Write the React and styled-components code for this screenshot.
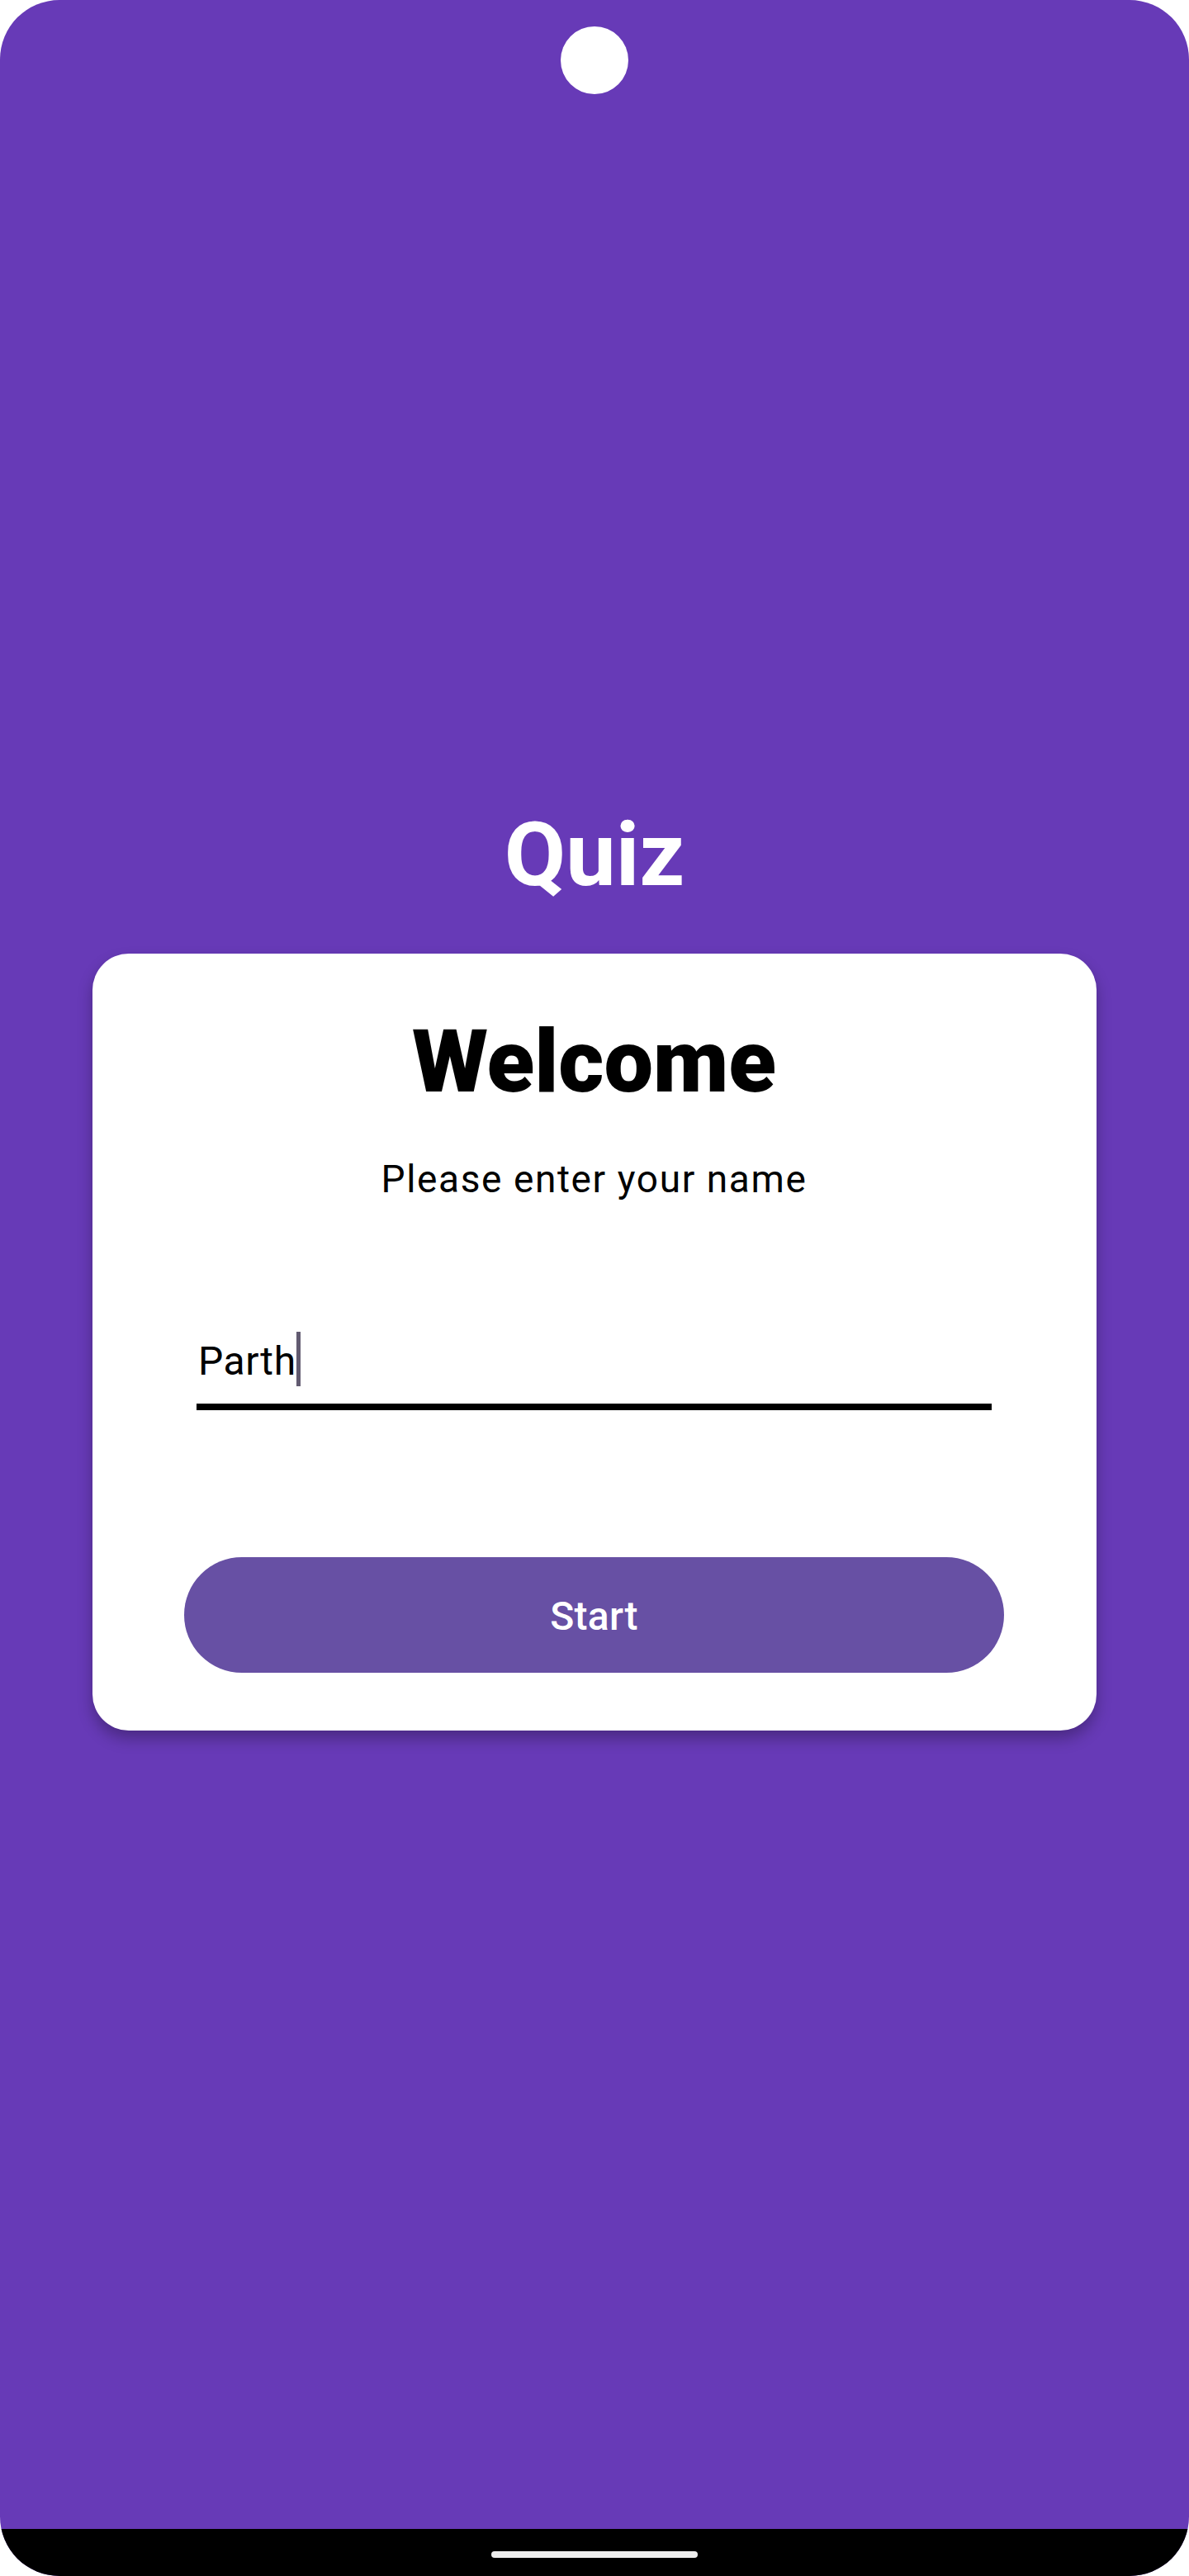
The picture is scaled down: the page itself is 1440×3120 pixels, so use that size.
import React from "react";
import styled, { createGlobalStyle } from "styled-components";

const GlobalStyle = createGlobalStyle`
  html, body {
    margin: 0;
    padding: 0;
    background: #ffffff;
  }
  * {
    box-sizing: border-box;
  }
`;

const Screen = styled.div`
  width: 1440px;
  height: 3120px;
  border-radius: 72px;
  overflow: hidden;
  background: #673ab7;
  display: flex;
  flex-direction: column;
  font-family: Roboto, "Liberation Sans", sans-serif;
`;

const StatusBar = styled.div`
  display: flex;
  justify-content: center;
  padding-top: 32px;
`;

const Camera = styled.div`
  width: 82px;
  height: 82px;
  border-radius: 50%;
  background: #ffffff;
`;

const Main = styled.main`
  flex: 1;
  display: flex;
  flex-direction: column;
  align-items: center;
  padding-top: 867px;
`;

const Title = styled.h1`
  margin: 0;
  font-size: 108px;
  line-height: 108px;
  font-weight: 700;
  color: #ffffff;
`;

const Card = styled.section`
  margin-top: 66px;
  width: 1216px;
  background: #ffffff;
  border-radius: 44px;
  box-shadow: 0 10px 18px rgba(0, 0, 0, 0.28);
  padding: 78px 112px 70px 111px;
  display: flex;
  flex-direction: column;
  align-items: center;
`;

const Heading = styled.h2`
  margin: 0;
  font-size: 106px;
  line-height: 106px;
  font-weight: 900;
  color: #000000;
`;

const Prompt = styled.p`
  margin: 66px 0 0;
  font-size: 46px;
  line-height: 46px;
  font-weight: 400;
  letter-spacing: 1.6px;
  color: #000000;
`;

const Field = styled.div`
  margin-top: 162px;
  width: 963px;
  align-self: flex-start;
  margin-left: 15px;
  padding-bottom: 21px;
  border-bottom: 8px solid #000000;
  display: flex;
  align-items: flex-start;
  height: 95px;
`;

const FieldText = styled.span`
  font-size: 48px;
  line-height: 66px;
  padding-top: 3px;
  padding-left: 2px;
  letter-spacing: 0.6px;
  color: #000000;
`;

const Caret = styled.span`
  width: 5px;
  height: 66px;
  background: #625b71;
`;

const StartButton = styled.button`
  margin-top: 178px;
  width: 100%;
  height: 140px;
  border: none;
  border-radius: 70px;
  background: #6750a4;
  color: #ffffff;
  font-family: inherit;
  font-size: 48px;
  font-weight: 500;
  line-height: 1;
  letter-spacing: 0.3px;
  padding-top: 4px;
  display: flex;
  align-items: center;
  justify-content: center;
  cursor: pointer;
`;

const NavBar = styled.div`
  height: 57px;
  background: #000000;
  display: flex;
  align-items: center;
  justify-content: center;
  padding-top: 4px;
`;

const Handle = styled.div`
  width: 250px;
  height: 8px;
  border-radius: 4px;
  background: #eeeeee;
`;

export default function App() {
  return (
    <>
      <GlobalStyle />
      <Screen>
        <StatusBar>
          <Camera />
        </StatusBar>
        <Main>
          <Title>Quiz</Title>
          <Card>
            <Heading>Welcome</Heading>
            <Prompt>Please enter your name</Prompt>
            <Field>
              <FieldText>Parth</FieldText>
              <Caret />
            </Field>
            <StartButton>Start</StartButton>
          </Card>
        </Main>
        <NavBar>
          <Handle />
        </NavBar>
      </Screen>
    </>
  );
}
